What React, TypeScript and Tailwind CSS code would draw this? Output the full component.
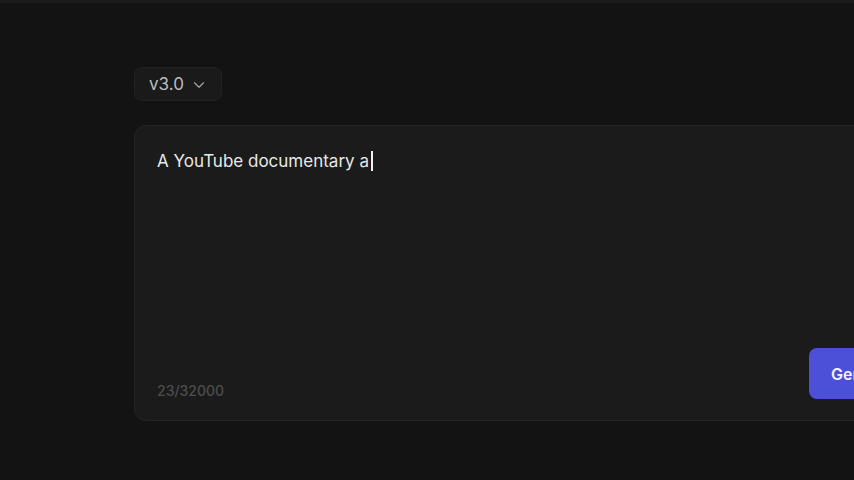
import { ChevronDown } from "lucide-react";

export default function App() {
  return (
    <div
      className="h-[480px] w-[854px] overflow-hidden bg-[#131313] text-white"
      style={{ fontFamily: "Inter, 'Noto Sans', sans-serif" }}
    >
      <div className="h-[3px] bg-[#1b1b1b]" />
      <div className="pl-[134px] pt-[64px]">
        <button
          type="button"
          className="flex h-[34px] items-center gap-[6px] rounded-lg border border-[#222] bg-[#1a1a1a] pl-[14px] pr-[13px] pt-[1px] text-[17px] text-[#bdbdbd]"
        >
          v3.0
          <ChevronDown className="h-[18px] w-[18px] text-[#a8a8a8]" strokeWidth={1.5} />
        </button>

        <div className="mt-[24px] flex h-[296px] w-[790px] flex-col rounded-xl border border-[#252525] bg-[#1b1b1b] pb-[21px] pl-[22px] pr-[21px] pt-[23px]">
          <div className="flex items-center text-[17px] leading-[24px] text-[#e8e8e8]">
            A YouTube documentary a
            <span className="ml-[2px] inline-block h-[20px] w-[2px] bg-[#f0f0f0]" />
          </div>
          <div className="mt-auto flex items-end justify-between">
            <span className="translate-y-[2px] text-[14px] font-medium leading-[20px] text-[#4d4d4d]">23/32000</span>
            <button
              type="button"
              className="h-[51px] w-[93px] rounded-lg bg-[#4c4fd7] pl-[22px] text-left text-[16px] font-semibold text-[#f2f2ff]"
            >
              Generate
            </button>
          </div>
        </div>
      </div>
    </div>
  );
}
